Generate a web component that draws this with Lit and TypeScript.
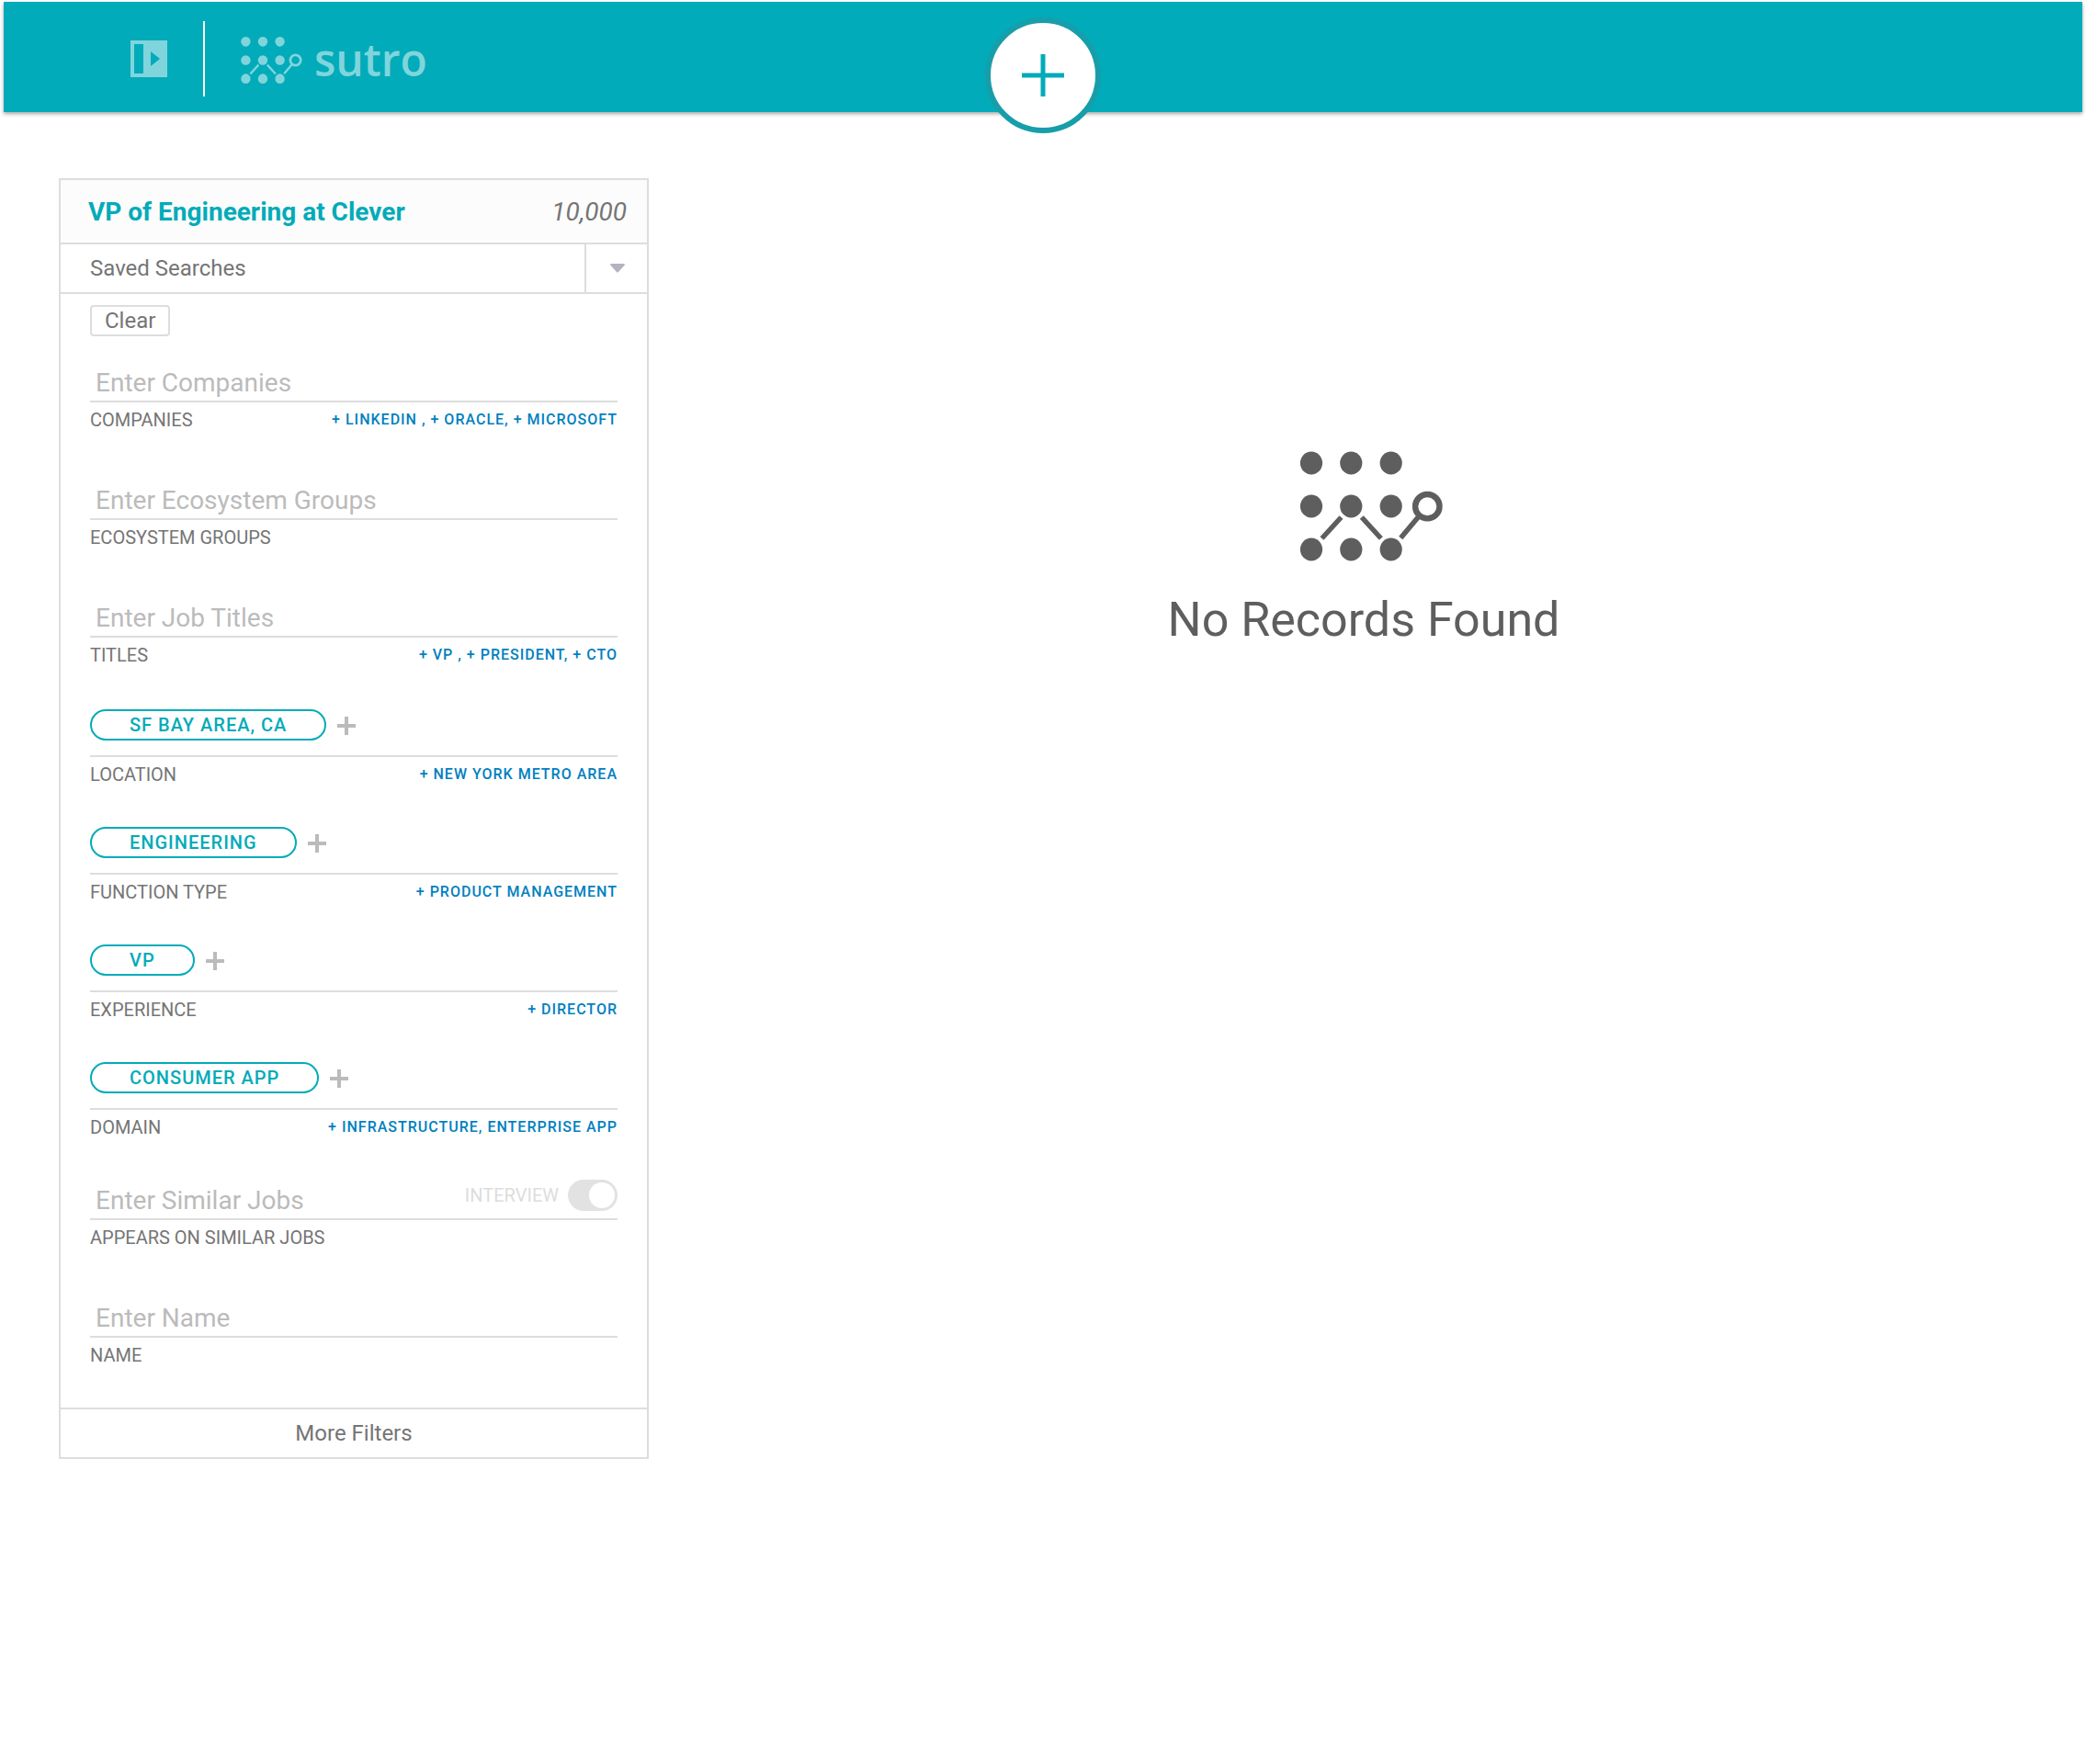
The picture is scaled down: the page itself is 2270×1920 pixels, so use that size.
import { LitElement, html, css, svg, nothing } from "lit";
import { customElement } from "lit/decorators.js";

interface TextField {
  id: string;
  label: string;
  placeholder: string;
  suggestions: string[];
  toggle?: string;
}

interface ChipField {
  id: string;
  label: string;
  chips: string[];
  suggestions: string[];
}

// Each suggestion carries its own trailing punctuation.
const SEARCH_FIELDS: TextField[] = [
  {
    id: "companies",
    label: "COMPANIES",
    placeholder: "Enter Companies",
    suggestions: ["+ LINKEDIN ,", "+ ORACLE,", "+ MICROSOFT"],
  },
  { id: "groups", label: "ECOSYSTEM GROUPS", placeholder: "Enter Ecosystem Groups", suggestions: [] },
  {
    id: "titles",
    label: "TITLES",
    placeholder: "Enter Job Titles",
    suggestions: ["+ VP ,", "+ PRESIDENT,", "+ CTO"],
  },
];

const CHIP_FIELDS: ChipField[] = [
  { id: "location", label: "LOCATION", chips: ["SF BAY AREA, CA"], suggestions: ["+ NEW YORK METRO AREA"] },
  { id: "function", label: "FUNCTION TYPE", chips: ["ENGINEERING"], suggestions: ["+ PRODUCT MANAGEMENT"] },
  { id: "experience", label: "EXPERIENCE", chips: ["VP"], suggestions: ["+ DIRECTOR"] },
  { id: "domain", label: "DOMAIN", chips: ["CONSUMER APP"], suggestions: ["+ INFRASTRUCTURE,", "ENTERPRISE APP"] },
];

const MORE_FIELDS: TextField[] = [
  {
    id: "similar",
    label: "APPEARS ON SIMILAR JOBS",
    placeholder: "Enter Similar Jobs",
    suggestions: [],
    toggle: "INTERVIEW",
  },
  { id: "name", label: "NAME", placeholder: "Enter Name", suggestions: [] },
];

// Dot grid with a trend line ending in a ring.
const mark = (viewBox: string) => html`
  <svg class="mark" viewBox=${viewBox} aria-hidden="true">
    ${[12, 55.3, 98.7].map((x) =>
      [12.5, 59.5, 106.5].map((y) => svg`<ellipse cx=${x} cy=${y} rx="12.1" ry="12.4" fill="currentColor" />`)
    )}
    <g fill="none" stroke="currentColor">
      <path stroke-width="5.5" d="M23.5 94.5 L44.5 71.5 M66.8 71.5 L87.8 94.5 M109.3 94 L129 70.5" />
      <circle stroke-width="6.4" cx="138.3" cy="59.7" r="13.2" />
    </g>
  </svg>
`;

@customElement("app-root")
export class AppRoot extends LitElement {
  static styles = css`
    :host {
      --teal: #02abb9;
      --line: #dddddd;
      --text: #757575;
      --hint: #bbbbbb;
      display: block;
      min-height: 100vh;
      box-sizing: border-box;
      padding: 2px 4px 0;
      background: #ffffff;
      color: var(--text);
      font-family: Roboto, "Liberation Sans", sans-serif;
    }

    *,
    *::before {
      box-sizing: border-box;
    }

    button,
    input,
    select {
      margin: 0;
      padding: 0;
      border: 0;
      background: none;
      color: inherit;
      font: inherit;
      appearance: none;
    }

    button,
    select {
      cursor: pointer;
    }

    svg {
      display: block;
    }

    .bar {
      position: relative;
      display: flex;
      align-items: center;
      height: 120px;
      padding: 4px 0 0 138px;
      background: var(--teal);
      box-shadow: 0 2px 4px rgba(0, 0, 0, 0.35);
    }

    .panel-toggle {
      color: #80d5dc;
    }

    .divider {
      width: 2px;
      height: 82px;
      margin: 0 39px;
      background: #ffffff;
    }

    .brand {
      display: flex;
      align-items: center;
      gap: 13px;
      padding-top: 2px;
      color: #80d5dc;
      text-decoration: none;
    }

    .brand .mark {
      width: 67px;
      height: 51px;
    }

    .wordmark {
      font: 600 48px/52px "Open Sans", "Noto Sans", sans-serif;
    }

    .create {
      position: absolute;
      top: 17px;
      left: 50%;
      display: grid;
      place-items: center;
      width: 126px;
      height: 126px;
      border: 6px solid #179eaa;
      border-radius: 50%;
      background: #ffffff;
      color: var(--teal);
      transform: translateX(-50%);
    }

    .page {
      display: flex;
      align-items: flex-start;
      padding: 72px 4px 80px 60px;
    }

    .panel {
      flex: 0 1 642px;
      min-width: 480px;
      border: 2px solid var(--line);
    }

    .panel-head {
      display: flex;
      align-items: center;
      justify-content: space-between;
      height: 70px;
      padding: 2px 22px 0 30px;
      border-bottom: 2px solid var(--line);
      background: #fcfcfc;
      font-size: 28px;
      line-height: 32px;
    }

    .title {
      margin: 0;
      color: var(--teal);
      font-size: inherit;
      font-weight: 700;
    }

    .count {
      font-style: italic;
    }

    .saved {
      display: grid;
      grid-template-columns: 1fr 68px;
      height: 54px;
      border-bottom: 2px solid var(--line);
      font-size: 24px;
      line-height: 52px;
    }

    .saved-select {
      grid-area: 1 / 1 / 2 / 3;
      padding-left: 32px;
    }

    .saved-arrow {
      grid-area: 1 / 2;
      display: grid;
      place-items: center;
      padding-left: 2px;
      border-left: 2px solid var(--line);
      color: #b4b4be;
      pointer-events: none;
    }

    .filters {
      display: flex;
      flex-direction: column;
      align-items: stretch;
      padding: 12px 32px 45px;
    }

    .clear {
      align-self: flex-start;
      height: 34px;
      margin-bottom: 28px;
      padding: 0 14px;
      border: 2px solid var(--line);
      border-radius: 4px;
      font-size: 24px;
      line-height: 30px;
    }

    .group {
      display: flex;
      flex-direction: column;
      gap: 53px;
    }

    .chips {
      gap: 45px;
      padding: 47px 0 45px;
    }

    .control {
      display: flex;
      height: 42px;
      border-bottom: 2px solid var(--line);
      box-sizing: content-box;
    }

    .chips .control {
      gap: 12px;
      height: 50px;
    }

    .entry {
      flex: 1;
      min-width: 0;
      align-self: flex-end;
      height: 38px;
      padding-left: 6px;
      font-size: 28px;
      line-height: 38px;
      outline: none;
    }

    .entry::placeholder {
      color: var(--hint);
      opacity: 1;
    }

    .switch-label {
      display: flex;
      align-items: center;
      gap: 10px;
      height: 34px;
      color: var(--line);
      font-size: 20px;
      line-height: 24px;
    }

    .switch {
      width: 54px;
      height: 34px;
      padding: 3px;
      border-radius: 17px;
      background: #e2e2e2;
    }

    .switch::before {
      content: "";
      display: block;
      width: 28px;
      height: 28px;
      border-radius: 50%;
      background: #ffffff;
    }

    .switch:checked::before {
      margin-left: auto;
    }

    .chip {
      height: 34px;
      padding: 0 41px;
      border: 2px solid var(--teal);
      border-radius: 17px;
      color: var(--teal);
      font-size: 20px;
      font-weight: 500;
      line-height: 30px;
      letter-spacing: 1px;
    }

    .add {
      height: 36px;
      color: var(--hint);
    }

    .meta {
      display: flex;
      justify-content: space-between;
      padding-top: 7px;
      font-size: 20px;
      line-height: 24px;
    }

    .suggestions {
      color: #0080c0;
      font-size: 16px;
      font-weight: 500;
      letter-spacing: 1px;
    }

    .suggestion {
      color: inherit;
      text-decoration: none;
    }

    .more {
      display: block;
      width: 100%;
      height: 54px;
      border-top: 2px solid var(--line);
      font-size: 24px;
      line-height: 52px;
    }

    .results {
      flex: 1;
      display: flex;
      flex-direction: column;
      align-items: center;
      gap: 34px;
      padding-top: 297px;
      color: #5e5e5e;
    }

    .results .mark {
      width: 172px;
      height: 120px;
    }

    .empty {
      margin: 0;
      font-size: 52px;
      line-height: 60px;
    }
  `;

  private meta(field: { id: string; label: string; suggestions: string[] }, isInput: boolean) {
    return html`
      <div class="meta">
        ${isInput
          ? html`<label for=${field.id}>${field.label}</label>`
          : html`<span id=${field.id}>${field.label}</span>`}
        ${field.suggestions.length
          ? html`<span class="suggestions"
              >${field.suggestions.map(
                (s, i) => html`${i ? " " : nothing}<a class="suggestion" href="#${field.id}">${s}</a>`
              )}</span
            >`
          : nothing}
      </div>
    `;
  }

  private textField(field: TextField) {
    return html`
      <div>
        <div class="control">
          <input class="entry" id=${field.id} type="text" placeholder=${field.placeholder} />
          ${field.toggle
            ? html`<label class="switch-label">
                ${field.toggle}<input class="switch" type="checkbox" role="switch" checked />
              </label>`
            : nothing}
        </div>
        ${this.meta(field, true)}
      </div>
    `;
  }

  private chipField(field: ChipField) {
    return html`
      <div role="group" aria-labelledby=${field.id}>
        <div class="control">
          ${field.chips.map((c) => html`<button class="chip" type="button">${c}</button>`)}
          <button class="add" type="button" aria-label="Add">
            <svg width="20" height="20" viewBox="0 0 20 20" fill="currentColor" aria-hidden="true">
              <path d="M8 0h4v8h8v4h-8v8H8v-8H0V8h8z" />
            </svg>
          </button>
        </div>
        ${this.meta(field, false)}
      </div>
    `;
  }

  render() {
    return html`
      <header class="bar">
        <button class="panel-toggle" type="button" aria-label="Toggle panel">
          <svg width="40" height="40" viewBox="0 0 40 40" fill="currentColor" aria-hidden="true">
            <path fill-rule="evenodd" d="M0 0h40v40H0z M4 4v32h10V4z M22 12v16l10-8z" />
          </svg>
        </button>
        <span class="divider"></span>
        <a class="brand" href="#home">
          ${mark("0 0 155 119")}
          <span class="wordmark">sutro</span>
        </a>
        <button class="create" type="button" aria-label="Create">
          <svg width="46" height="46" viewBox="0 0 46 46" aria-hidden="true">
            <path d="M23 0v46M0 23h46" stroke="currentColor" stroke-width="5" />
          </svg>
        </button>
      </header>
      <div class="page">
        <aside class="panel">
          <div class="panel-head">
            <h1 class="title">VP of Engineering at Clever</h1>
            <span class="count">10,000</span>
          </div>
          <div class="saved">
            <select class="saved-select" aria-label="Saved Searches">
              <option>Saved Searches</option>
            </select>
            <span class="saved-arrow">
              <svg width="16" height="10" viewBox="0 0 16 10" fill="currentColor" aria-hidden="true">
                <path d="M1 0h14q1.5.6.6 1.8L9 9q-1 1-2 0L.4 1.8Q-.5.6 1 0z" />
              </svg>
            </span>
          </div>
          <form class="filters">
            <button class="clear" type="reset">Clear</button>
            <div class="group">${SEARCH_FIELDS.map((f) => this.textField(f))}</div>
            <div class="group chips">${CHIP_FIELDS.map((f) => this.chipField(f))}</div>
            <div class="group">${MORE_FIELDS.map((f) => this.textField(f))}</div>
          </form>
          <button class="more" type="button">More Filters</button>
        </aside>
        <main class="results">
          ${mark("-17 0 172 119")}
          <p class="empty">No Records Found</p>
        </main>
      </div>
    `;
  }
}
